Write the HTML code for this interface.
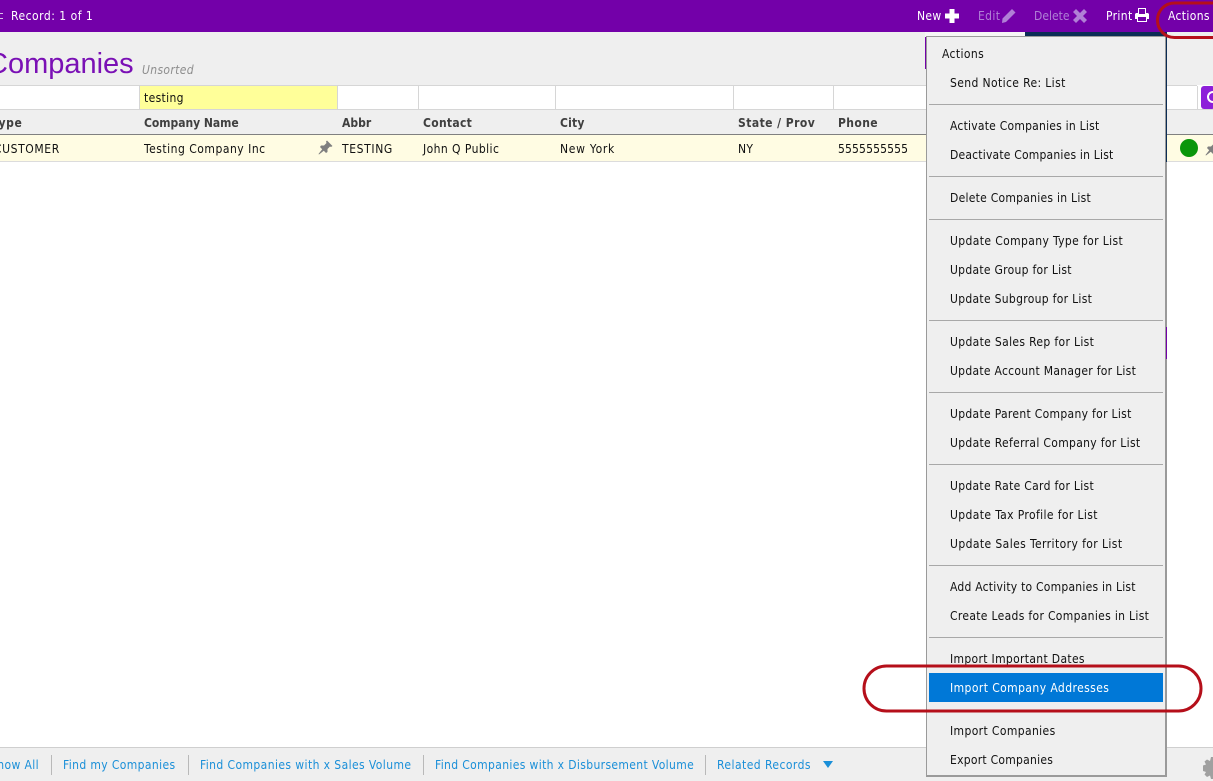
<!DOCTYPE html>
<html><head><meta charset="utf-8">
<style>
html,body{margin:0;padding:0;width:1213px;height:781px;overflow:hidden;background:#fff}
body{position:relative;font-family:"DejaVu Sans Condensed","DejaVu Sans",sans-serif;font-stretch:condensed;font-size:12px;color:#111}
.a{position:absolute}
.t{position:absolute;white-space:nowrap;line-height:14px;letter-spacing:.35px}
.h{font-weight:bold;color:#404040;top:116px;letter-spacing:.2px}
.d{top:142px}
.w{color:#fff;top:9px}
.f{color:#b07fd6;top:9px}
.l{color:#1a8fd8;top:758px;letter-spacing:.38px}
.m{left:950px;letter-spacing:.38px}
.s{position:absolute;left:929px;width:234px;height:1px;background:#a8a8a8}
.c{position:absolute;top:86px;width:1px;height:24px;background:#d6d6d6}
.b{position:absolute;top:755px;width:1px;height:20px;background:#b9b9b9}
</style></head><body>
<div class="a" style="left:0;top:0;width:1213px;height:32px;background:#7300a9"></div>
<div class="a" style="left:0;top:13px;width:3px;height:1px;background:#d9bfe8"></div>
<div class="a" style="left:0;top:18px;width:3px;height:1px;background:#d9bfe8"></div>
<div class="t w" style="left:11px;letter-spacing:.5px">Record: 1 of 1</div>
<div class="a" style="left:0;top:32px;width:1213px;height:53px;background:#efefef"></div>
<div class="t" style="left:-13px;top:46px;font-size:29px;line-height:36px;color:#7a10b5;letter-spacing:0;font-stretch:normal;font-family:'Liberation Sans',sans-serif">Companies</div>
<div class="t" style="left:142px;top:63px;color:#8d8d8d;font-style:italic">Unsorted</div>

<div class="a" style="left:0;top:85px;width:1197px;height:25px;background:#fff;border-top:1px solid #d6d6d6;box-sizing:border-box"></div>
<div class="a" style="left:140px;top:86px;width:197px;height:23px;background:#ffff99"></div>
<div class="c" style="left:139px"></div><div class="c" style="left:337px"></div><div class="c" style="left:418px"></div><div class="c" style="left:555px"></div><div class="c" style="left:733px"></div><div class="c" style="left:833px"></div><div class="c" style="left:1197px"></div>
<div class="t" style="left:144px;top:91px">testing</div>
<div class="a" style="left:1201px;top:86px;width:14px;height:23px;background:#8d1fd9;border-radius:3px"></div>
<svg class="a" style="left:1201px;top:86px" width="12" height="23"><circle cx="12" cy="11" r="5" fill="none" stroke="#fff" stroke-width="2"/></svg>

<div class="a" style="left:0;top:109px;width:1213px;height:26px;background:#efefef;border-top:1px solid #d6d6d6;border-bottom:1px solid #808080;box-sizing:border-box"></div>
<div class="t h" style="left:-8px;letter-spacing:.6px">Type</div>
<div class="t h" style="left:144px;letter-spacing:-.03px">Company Name</div>
<div class="t h" style="left:342px;letter-spacing:0">Abbr</div>
<div class="t h" style="left:423px;letter-spacing:.3px">Contact</div>
<div class="t h" style="left:560px">City</div>
<div class="t h" style="left:738px;letter-spacing:.45px">State / Prov</div>
<div class="t h" style="left:838px;letter-spacing:.4px">Phone</div>

<div class="a" style="left:0;top:135px;width:1213px;height:27px;background:#fffce3;border-bottom:1px solid #dcdcdc;box-sizing:border-box"></div>
<div class="t d" style="left:-6px;letter-spacing:.6px">CUSTOMER</div>
<div class="t d" style="left:144px;letter-spacing:.51px">Testing Company Inc</div>
<div class="t d" style="left:342px;letter-spacing:.63px">TESTING</div>
<div class="t d" style="left:423px;letter-spacing:.43px">John Q Public</div>
<div class="t d" style="left:560px;letter-spacing:.72px">New York</div>
<div class="t d" style="left:738px">NY</div>
<div class="t d" style="left:838px;letter-spacing:.15px">5555555555</div>
<svg class="a" style="left:318px;top:140px" width="15" height="15" viewBox="0 0 15 15"><path d="M9 .5L14.500 6L13 7L12 6.500L9.500 9L9.500 12L8 13L5.800 10.800L1 14.500L.5 14L4.200 9.200L2 7L3 5.500L6 5.500L8.500 3L8 1.500Z" fill="#7f7f7f"/></svg>
<div class="a" style="left:1180px;top:139px;width:18px;height:18px;border-radius:50%;background:#0a960a"></div>
<svg class="a" style="left:1205px;top:141px" width="8" height="15" viewBox="0 0 8 15"><path d="M9 .5L14.500 6L13 7L12 6.500L9.500 9L9.500 12L8 13L5.800 10.800L1 14.500L.5 14L4.200 9.200L2 7L3 5.500L6 5.500L8.500 3L8 1.500Z" fill="#7f7f7f"/></svg>

<div class="a" style="left:0;top:747px;width:1213px;height:34px;background:#efefef;border-top:1px solid #cfcfcf;box-sizing:border-box"></div>
<div class="t l" style="left:-10px">Show All</div>
<div class="b" style="left:51px"></div>
<div class="t l" style="left:63px">Find my Companies</div>
<div class="b" style="left:188px"></div>
<div class="t l" style="left:200px;letter-spacing:.41px">Find Companies with x Sales Volume</div>
<div class="b" style="left:423px"></div>
<div class="t l" style="left:435px;letter-spacing:.36px">Find Companies with x Disbursement Volume</div>
<div class="b" style="left:705px"></div>
<div class="t l" style="left:717px;letter-spacing:.45px">Related Records</div>
<svg class="a" style="left:823px;top:761px" width="11" height="8"><path d="M0 0H10L5 7Z" fill="#1a8fd8"/></svg>
<svg class="a" style="left:1202px;top:755px" width="11" height="24" viewBox="0 0 11 24"><path d="M9 2H13V24H9L8 20.500L5 22L2.500 19.500L4 17L1 16V10.500L4 9.500L2.500 6.500L5 4.500L8 6Z" fill="#a0a0a0"/></svg>

<!-- toolbar right -->
<div class="t w" style="left:917px">New</div>
<svg class="a" style="left:945px;top:9px" width="14" height="14"><path d="M4.500 0H9.500V4.500H14V9.500H9.500V14H4.500V9.500H0V4.500H4.500Z" fill="#fff"/></svg>
<div class="t f" style="left:978px">Edit</div>
<svg class="a" style="left:1001px;top:8px" width="15" height="15" viewBox="0 0 15 15"><path d="M11 1L14.500 4.500L5 14L1 15L1.500 10.500Z" fill="#b07fd6"/></svg>
<div class="t f" style="left:1034px;letter-spacing:0">Delete</div>
<svg class="a" style="left:1073px;top:9px" width="14" height="14" viewBox="0 0 14 14"><path d="M3 0L7 4L11 0L14 3L10 7L14 11L11 14L7 10L3 14L0 11L4 7L0 3Z" fill="#b07fd6"/></svg>
<div class="t w" style="left:1106px">Print</div>
<svg class="a" style="left:1135px;top:8px" width="14" height="14" viewBox="0 0 14 14"><path d="M3 0H11V5H13L14 6V11H12V14H2V11H0V6L1 5H3ZM4 1V6H10V1ZM3 9V13H11V9Z" fill="#fff" fill-rule="evenodd"/></svg>
<div class="t w" style="left:1168px">Actions</div>

<!-- dark sliver above menu -->
<div class="a" style="left:925px;top:32px;width:100px;height:5px;background:#f6f6f6"></div>
<div class="a" style="left:1025px;top:32px;width:142px;height:4px;background:#0b2c55"></div>
<div class="a" style="left:925px;top:37px;width:1px;height:32px;background:#7300a9"></div>

<!-- menu -->
<div class="a" style="left:926px;top:36px;width:241px;height:741px;background:#efefef;border:1px solid #9a9a9a;border-width:1px 2px 2px 1px;box-sizing:border-box"></div>
<div class="a" style="left:1166px;top:37px;width:1px;height:125px;background:#0b2c55"></div>
<div class="a" style="left:1166px;top:327px;width:1px;height:32px;background:#7300a9"></div>
<div class="t" style="left:942px;top:47px;letter-spacing:.38px">Actions</div>
<div class="t m" style="top:76px">Send Notice Re: List</div>
<div class="s" style="top:104px"></div>
<div class="t m" style="top:119px;letter-spacing:.23px">Activate Companies in List</div>
<div class="t m" style="top:148px;letter-spacing:.2px">Deactivate Companies in List</div>
<div class="s" style="top:176px"></div>
<div class="t m" style="top:191px;letter-spacing:.26px">Delete Companies in List</div>
<div class="s" style="top:219px"></div>
<div class="t m" style="top:234px">Update Company Type for List</div>
<div class="t m" style="top:263px;letter-spacing:.28px">Update Group for List</div>
<div class="t m" style="top:292px;letter-spacing:.3px">Update Subgroup for List</div>
<div class="s" style="top:320px"></div>
<div class="t m" style="top:335px;letter-spacing:.34px">Update Sales Rep for List</div>
<div class="t m" style="top:364px;letter-spacing:.28px">Update Account Manager for List</div>
<div class="s" style="top:392px"></div>
<div class="t m" style="top:407px;letter-spacing:.31px">Update Parent Company for List</div>
<div class="t m" style="top:436px;letter-spacing:.32px">Update Referral Company for List</div>
<div class="s" style="top:464px"></div>
<div class="t m" style="top:479px;letter-spacing:.3px">Update Rate Card for List</div>
<div class="t m" style="top:508px">Update Tax Profile for List</div>
<div class="t m" style="top:537px;letter-spacing:.41px">Update Sales Territory for List</div>
<div class="s" style="top:565px"></div>
<div class="t m" style="top:580px;letter-spacing:.23px">Add Activity to Companies in List</div>
<div class="t m" style="top:609px;letter-spacing:.32px">Create Leads for Companies in List</div>
<div class="s" style="top:637px"></div>
<div class="t m" style="top:652px;letter-spacing:.33px">Import Important Dates</div>
<div class="a" style="left:929px;top:673px;width:234px;height:29px;background:#0078d7"></div>
<div class="t m" style="top:681px;color:#fff;letter-spacing:.42px">Import Company Addresses</div>
<div class="t m" style="top:724px">Import Companies</div>
<div class="t m" style="top:753px;letter-spacing:.26px">Export Companies</div>

<!-- red annotations -->
<svg class="a" style="left:0;top:0;pointer-events:none" width="1213" height="781">
<rect x="864" y="666" width="337" height="45" rx="22.500" ry="22.500" fill="none" stroke="#b50f1a" stroke-width="3"/>
<rect x="1157.500" y="3" width="120" height="34.500" rx="17" ry="17" fill="none" stroke="#b50f1a" stroke-width="3"/>
</svg>
</body></html>
